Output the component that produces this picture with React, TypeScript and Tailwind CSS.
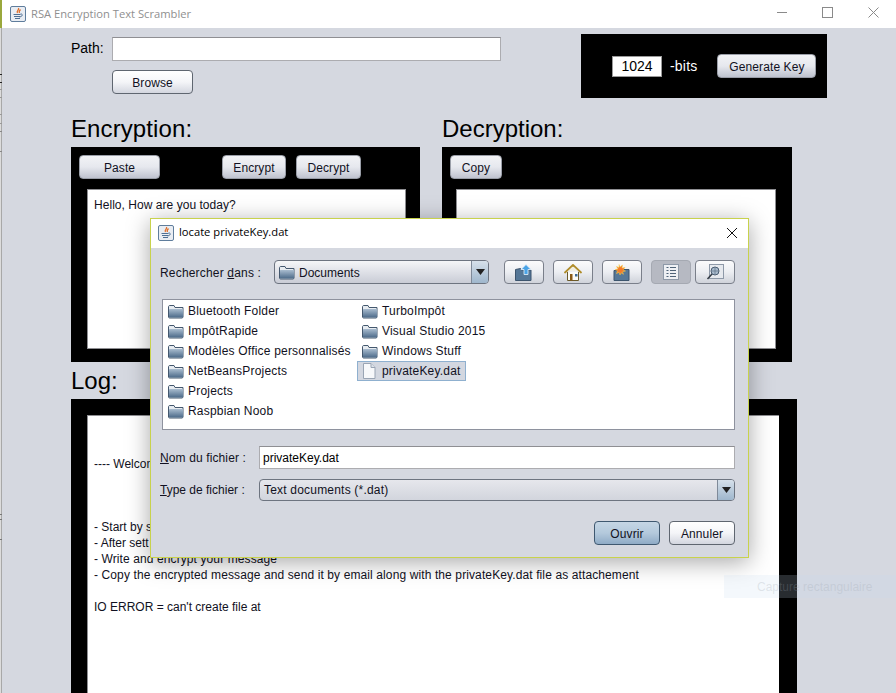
import React from "react";

const Btn = ({ className = "", children }: { className?: string; children: React.ReactNode }) => (
  <div className={`flex items-center justify-center rounded-[4px] border pt-px text-[12px] tracking-[0.1px] text-[#111122] h-[24px] ${className}`}>{children}</div>
);
const Light = "border-[#5f6670] bg-gradient-to-b from-[#ffffff] via-[#f4f5f8] to-[#d3d6df]";
const OnBlack = "border-[#9a9ea8] bg-gradient-to-b from-[#f2f3f6] via-[#e6e8ee] to-[#bfc3cf]";

const JavaIcon = () => (
  <svg width="16" height="16" viewBox="0 0 16 16" className="shrink-0">
    <rect x="0.5" y="0.5" width="15" height="15" rx="1.5" fill="#e9edf3" stroke="#5f7d9c" />
    <path d="M8.500 2c1 2-2.500 3-1 5M10.500 3.500c-1 1-2 2-1 3.500" stroke="#e0702c" strokeWidth="1.300" fill="none" />
    <path d="M3.500 8.500h7M4 10.500h6M5 12.500h5" stroke="#4d6f94" strokeWidth="1" />
    <path d="M10.500 8c2.500-.5 2.500 2.500-1 3" stroke="#4d6f94" strokeWidth="1" fill="none" />
  </svg>
);

const Folder = () => (
  <svg width="16" height="16" viewBox="0 0 16 16" className="shrink-0">
    <defs>
      <linearGradient id="fg" x1="0" y1="0" x2="0" y2="1">
        <stop offset="0" stopColor="#a9bccf" />
        <stop offset="1" stopColor="#4c6a89" />
      </linearGradient>
    </defs>
    <path d="M0.500 3.500V14c0 .5.500 1 1 1h12.500c.5 0 1-.5 1-1V4.500H7L6 2.500H2C1 2.500.5 3 .5 3.500z" fill="#e6ebf0" stroke="#44586e" />
    <rect x="1" y="6" width="14" height="8.500" rx="0.500" fill="url(#fg)" />
  </svg>
);

const FileIco = () => (
  <svg width="16" height="16" viewBox="0 0 16 16" className="shrink-0">
    <path d="M1.500.5h7.500l4 4v11h-11.500z" fill="#f7f8fa" stroke="#9aa5b4" />
    <path d="M9 .5v4h4" fill="#dde2ea" stroke="#9aa5b4" />
  </svg>
);

const TBtn = ({ w, active, children }: { w: string; active?: boolean; children: React.ReactNode }) => (
  <div className={`flex items-center justify-center rounded-[4px] border h-[24px] ${w} ${active ? "border-[#a5a9b2] bg-[#b6b9c2]" : "border-[#7a7f8a] bg-gradient-to-b from-[#fbfbfc] via-[#eceef2] to-[#cfd2da]"}`}>{children}</div>
);

const UpIco = () => (
  <svg width="18" height="17" viewBox="0 0 18 17">
    <path d="M.5 5.500l5-1 1 1.500h9.500v10.500H.5z" fill="#557797" stroke="#3d556e" />
    <path d="M11 .5l5 5h-3v5h-4v-5H6z" fill="#4aa3e6" stroke="#e9f3fb" strokeWidth="0.800" />
  </svg>
);
const HomeIco = () => (
  <svg width="18" height="17" viewBox="0 0 18 17">
    <path d="M3.500 8v8.500h11V8" fill="#fbfbf6" stroke="#6b5a2a" />
    <path d="M9 1L1 8.500M9 1l8 7.500" stroke="#b08d2a" strokeWidth="1.800" strokeLinecap="round" />
    <path d="M9 2.500L4 7h10z" fill="#f2efe0" />
    <rect x="6" y="10" width="2.500" height="6.500" fill="#8a5a14" />
    <rect x="11" y="10" width="2.500" height="2.500" fill="#3f6a94" />
  </svg>
);
const NewIco = () => (
  <svg width="18" height="17" viewBox="0 0 18 17">
    <path d="M1 6.500h5l1-1h9v11H1z" fill="#557797" stroke="#3d556e" />
    <path d="M6 .5l1 2.500 2.500-2-.5 3 3-.5-2 2.500 2.500 1-3 .8 1 2.500-2.500-1.500L7 11l-.8-2.700L3.500 9.500l1-2.700L2 5.500l3-.5L3.500 2.500 6 3.500z" fill="#f47a2a" stroke="#f8d24a" strokeWidth="0.500" />
  </svg>
);
const ListIco = () => (
  <svg width="16" height="16" viewBox="0 0 16 16">
    <rect x=".5" y=".5" width="15" height="15" fill="#eef0f4" stroke="#8e99a8" />
    <path d="M3.500 3.500h2M7 3.500h6M3.500 6.500h2M7 6.500h6M3.500 9.500h2M7 9.500h6M3.500 12.500h2M7 12.500h6" stroke="#4f6378" />
  </svg>
);
const DetailIco = () => (
  <svg width="18" height="16" viewBox="0 0 18 16">
    <rect x="3.500" y=".5" width="14" height="14" fill="#e6e9ee" stroke="#8e99a8" />
    <circle cx="9" cy="7" r="4" fill="#a9bacc" stroke="#4a5d72" />
    <path d="M5 7h8M9 3v8" stroke="#5e7288" strokeWidth="0.700" />
    <path d="M6 10l-4.500 5" stroke="#333a44" strokeWidth="1.500" />
  </svg>
);

const Arrow = () => (
  <div className="flex items-center justify-center w-[17px] border-l border-[#7f8a99] bg-gradient-to-b from-[#d6e0ea] to-[#9fb7cd]">
    <svg width="9" height="6" viewBox="0 0 9 6"><path d="M0 0h9L4.500 6z" fill="#222" /></svg>
  </div>
);

const Row = ({ icon, children, selected }: { icon?: React.ReactNode; children: React.ReactNode; selected?: boolean }) => (
  <div className={`flex items-center h-[20px] pl-[4px] gap-[4px] border ${selected ? "w-[109px] border-[#8fb0cf] bg-[#d3d7e0]" : "border-transparent"}`}>
    {icon ?? <Folder />}
    <span className="whitespace-nowrap tracking-[0.2px]">{children}</span>
  </div>
);

const Tick = ({ y, c }: { y: string; c: string }) => <div className={`absolute left-0 w-[2px] h-px ${y} ${c}`} />;

export default function App() {
  return (
    <div className="relative w-[896px] h-[693px] overflow-hidden bg-[#d5d8e0] text-[12px] text-[#111122] [font-family:'Liberation_Sans',Arial,sans-serif]">
      {/* window title bar */}
      <div className="flex items-center h-[28px] bg-white pl-[10px] gap-[5px]">
        <JavaIcon />
        <span className="text-[#8f8f8f] text-[11.200px] [font-family:'Open_Sans',sans-serif]">RSA Encryption Text Scrambler</span>
        <div className="ml-auto flex items-center">
          <svg width="104" height="28" viewBox="0 0 104 28" className="mr-[15px]">
            <path d="M0 12.500h10" stroke="#8a8a8a" />
            <rect x="45.500" y="7.500" width="10" height="10" fill="none" stroke="#8a8a8a" />
            <path d="M91.500 7.500l10 10M101.500 7.500l-10 10" stroke="#8a8a8a" />
          </svg>
        </div>
      </div>

      {/* top row */}
      <div className="flex items-start h-[83px] pl-[71px]">
        <div className="w-[510px] pt-[9px]">
          <div className="flex items-center h-[23px]">
            <span className="w-[41px] text-[14px] text-black">Path:</span>
            <div className="w-[389px] h-[24px] bg-white border border-[#acacb0] border-t-[#8f8f93]" />
          </div>
          <Btn className={`w-[81px] ml-[41px] mt-[10px] ${Light}`}>Browse</Btn>
        </div>
        <div className="flex items-center w-[246px] h-[64px] mt-[6px] bg-black pl-[31px]">
          <div className="w-[50px] h-[21px] bg-white border border-[#9a9a9a] flex items-center justify-center text-[14px] text-black">1024</div>
          <span className="ml-[8px] text-[14px] text-white tracking-[0.2px]">-bits</span>
          <Btn className={`w-[99px] ml-[20px] ${OnBlack}`}>Generate Key</Btn>
        </div>
      </div>

      {/* Encryption / Decryption */}
      <div className="flex pl-[71px] gap-[22px]">
        <div className="w-[349px]">
          <div className="h-[36px] text-[24px] text-black leading-[36px] tracking-[0.1px]">Encryption:</div>
          <div className="h-[215px] bg-black pt-[8px]">
            <div className="flex h-[24px] pl-[8px]">
              <Btn className={`w-[81px] ${OnBlack}`}>Paste</Btn>
              <Btn className={`w-[64px] ml-[62px] ${OnBlack}`}>Encrypt</Btn>
              <Btn className={`w-[65px] ml-[10px] ${OnBlack}`}>Decrypt</Btn>
            </div>
            <div className="ml-[16px] mt-[10px] w-[319px] h-[160px] bg-white border border-[#8f8f93] pl-[6px] pt-[7px] leading-[16px] tracking-[0.04px]">Hello, How are you today?</div>
          </div>
        </div>
        <div className="w-[350px]">
          <div className="h-[36px] text-[24px] text-black leading-[36px]">Decryption:</div>
          <div className="h-[215px] bg-black pt-[8px]">
            <Btn className={`w-[52px] ml-[8px] ${OnBlack}`}>Copy</Btn>
            <div className="ml-[14px] mt-[10px] w-[320px] h-[160px] bg-white border border-[#8f8f93]" />
          </div>
        </div>
      </div>

      {/* Log */}
      <div className="pl-[71px]">
        <div className="h-[37px] text-[24px] text-black leading-[37px]">Log:</div>
        <div className="w-[726px] h-[294px] bg-black pl-[16px] pt-[16px]">
          <div className="w-[692px] h-[278px] bg-white border-l border-t border-[#8f8f93] pl-[6px] pt-[40px] leading-[16px] whitespace-pre">
            <div>---- Welcome</div>
            <div className="h-[47px]" />
            <div>- Start by s</div>
            <div>- After sett</div>
            <div className="tracking-[0.1px]">- Write and encrypt your message</div>
            <div className="tracking-[0.11px]">- Copy the encrypted message and send it by email along with the privateKey.dat file as attachement</div>
            <div className="h-[16px]" />
            <div>IO ERROR = can't create file at</div>
          </div>
        </div>
      </div>

      {/* left edge sliver: the window behind peeking out */}
      <div className="absolute left-0 top-0 w-[2px] h-[693px] bg-[#dcdcdc] border-r border-[#a8a8a8]" />
      <div className="absolute left-0 top-0 w-[2px] h-[28px] bg-[#9aa83c]" />
      <Tick y="top-[74px]" c="bg-[#222222]" />
      <Tick y="top-[82px]" c="bg-[#222222]" />
      <Tick y="top-[89px]" c="bg-[#999999]" />
      <Tick y="top-[97px]" c="bg-[#999999]" />
      <Tick y="top-[114px]" c="bg-[#999999]" />
      <Tick y="top-[123px]" c="bg-[#999999]" />
      <Tick y="top-[131px]" c="bg-[#888888]" />
      <Tick y="top-[151px]" c="bg-[#888888]" />
      <Tick y="top-[514px]" c="bg-[#777777]" />
      <Tick y="top-[519px]" c="bg-[#777777]" />
      <Tick y="top-[539px]" c="bg-[#777777]" />

      {/* file dialog */}
      <div className="absolute left-[150px] top-[218px] w-[599px] h-[340px] border border-[#c8d24c] bg-[#d5d8e0] shadow-[0_4px_22px_rgba(0,0,0,0.35)]">
        <div className="flex items-center h-[29px] bg-white pl-[7px] pb-[2px] gap-[5px]">
          <JavaIcon />
          <span className="text-black text-[11.200px] [font-family:'Open_Sans',sans-serif]">locate privateKey.dat</span>
          <svg width="10" height="10" viewBox="0 0 10 10" className="ml-auto mr-[11px]">
            <path d="M0 0l10 10M10 0L0 10" stroke="#111" />
          </svg>
        </div>

        <div className="flex items-center mt-[12px] h-[24px] pl-[9px]">
          <span className="w-[114px] pt-px tracking-[0.18px]">Rechercher <span className="underline">d</span>ans :</span>
          <div className="flex w-[215px] h-[24px] rounded-[4px] border overflow-hidden border-[#6d7480] bg-gradient-to-b from-[#f5f6f8] to-[#c9ccd6]">
            <div className="flex items-center flex-1 pl-[4px] gap-[4px]"><Folder /> <span className="pt-px">Documents</span></div>
            <Arrow />
          </div>
          <div className="flex ml-[15px] gap-[9px]">
            <TBtn w="w-[40px]"><UpIco /></TBtn>
            <TBtn w="w-[40px]"><HomeIco /></TBtn>
            <TBtn w="w-[40px]"><NewIco /></TBtn>
          </div>
          <div className="flex ml-[9px] gap-[4px]">
            <TBtn w="w-[40px]" active><ListIco /></TBtn>
            <TBtn w="w-[40px]"><DetailIco /></TBtn>
          </div>
        </div>

        <div className="flex ml-[11px] mt-[15px] w-[573px] h-[131px] bg-white border border-[#8e929e] pt-px">
          <div className="w-[194px]">
            <Row>Bluetooth Folder</Row>
            <Row>ImpôtRapide</Row>
            <Row>Modèles Office personnalisés</Row>
            <Row>NetBeansProjects</Row>
            <Row>Projects</Row>
            <Row>Raspbian Noob</Row>
          </div>
          <div>
            <Row>TurboImpôt</Row>
            <Row>Visual Studio 2015</Row>
            <Row>Windows Stuff</Row>
            <Row selected icon={<FileIco />}>privateKey.dat</Row>
          </div>
        </div>

        <div className="flex items-center mt-[16px] h-[23px] pl-[9px]">
          <span className="w-[99px] tracking-[0.12px]"><span className="underline">N</span>om du fichier :</span>
          <div className="flex items-center w-[476px] h-[23px] bg-white border border-[#acacb0] border-t-[#8f8f93] pl-[3px] text-black">privateKey.dat</div>
        </div>
        <div className="flex items-center mt-[10px] h-[21px] pl-[9px]">
          <span className="w-[99px]"><span className="underline">T</span>ype de fichier :</span>
          <div className="flex w-[476px] h-[22px] rounded-[4px] border overflow-hidden border-[#6d7480] bg-gradient-to-b from-[#e6e7ec] to-[#d2d5dd]">
            <div className="flex items-center flex-1 pl-[4px] tracking-[0.2px]">Text documents (*.dat)</div>
            <Arrow />
          </div>
        </div>
        <div className="flex justify-end mt-[21px] pr-[13px] gap-[9px]">
          <Btn className="w-[66px] border-[#3f5870] bg-gradient-to-b from-[#c5d6e5] via-[#b4c9dc] to-[#8fabc6]">Ouvrir</Btn>
          <Btn className={`w-[66px] ${Light}`}>Annuler</Btn>
        </div>
      </div>

      {/* fading capture toast */}
      <div className="absolute left-[724px] top-[575px] w-[172px] h-[23px] bg-[#c9ddf0]/20 flex items-center pl-[33px] text-[#9aa4ae]/25">Capture rectangulaire</div>
    </div>
  );
}
